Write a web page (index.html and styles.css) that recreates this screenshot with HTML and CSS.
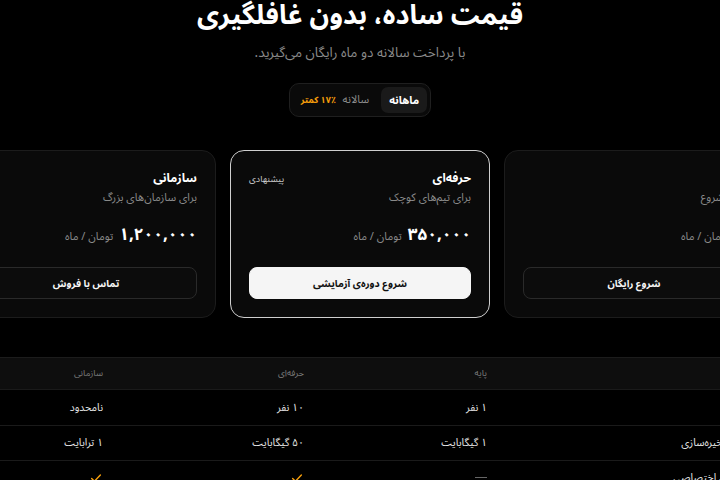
FILE: index.html
```html
<!DOCTYPE html>
<html lang="fa" dir="rtl">
<head>
<meta charset="utf-8">
<title>قیمت‌گذاری</title>
<link rel="stylesheet" href="styles.css">
</head>
<body>
<main class="page">
  <h1 class="title">قیمت ساده، بدون غافلگیری</h1>
  <p class="subtitle">با پرداخت سالانه دو ماه رایگان می‌گیرید.</p>

  <div class="toggle">
    <button class="seg seg-active">ماهانه</button>
    <button class="seg">سالانه <span class="save">٪۱۷ کمتر</span></button>
  </div>

  <section class="cards">
    <article class="card">
      <div class="card-head">
        <h2 class="card-title">پایه</h2>
      </div>
      <p class="card-desc">برای شروع</p>
      <div class="price"><span class="amount">۰</span><span class="unit">تومان / ماه</span></div>
      <button class="btn">شروع رایگان</button>
    </article>

    <article class="card card-featured">
      <div class="card-head">
        <h2 class="card-title">حرفه‌ای</h2>
        <span class="badge">پیشنهادی</span>
      </div>
      <p class="card-desc">برای تیم‌های کوچک</p>
      <div class="price"><span class="amount">۳۵۰,۰۰۰</span><span class="unit">تومان / ماه</span></div>
      <button class="btn btn-primary">شروع دوره‌ی آزمایشی</button>
    </article>

    <article class="card">
      <div class="card-head">
        <h2 class="card-title">سازمانی</h2>
      </div>
      <p class="card-desc">برای سازمان‌های بزرگ</p>
      <div class="price"><span class="amount">۱,۲۰۰,۰۰۰</span><span class="unit">تومان / ماه</span></div>
      <button class="btn">تماس با فروش</button>
    </article>
  </section>

  <section class="compare">
    <div class="row row-head">
      <div class="cell"></div>
      <div class="cell">پایه</div>
      <div class="cell">حرفه‌ای</div>
      <div class="cell">سازمانی</div>
    </div>
    <div class="row">
      <div class="cell">کاربران</div>
      <div class="cell">۱ نفر</div>
      <div class="cell">۱۰ نفر</div>
      <div class="cell">نامحدود</div>
    </div>
    <div class="row">
      <div class="cell">فضای ذخیره‌سازی</div>
      <div class="cell">۱ گیگابایت</div>
      <div class="cell">۵۰ گیگابایت</div>
      <div class="cell">۱ ترابایت</div>
    </div>
    <div class="row">
      <div class="cell">پشتیبانی اختصاصی</div>
      <div class="cell"><span class="dash"></span></div>
      <div class="cell"><svg class="check" viewBox="0 0 16 16" width="14" height="14"><path d="M3 8.5l3.2 3.2L13 4.5" fill="none" stroke="#f59e0b" stroke-width="1.6" stroke-linecap="round" stroke-linejoin="round"/></svg></div>
      <div class="cell"><svg class="check" viewBox="0 0 16 16" width="14" height="14"><path d="M3 8.5l3.2 3.2L13 4.5" fill="none" stroke="#f59e0b" stroke-width="1.6" stroke-linecap="round" stroke-linejoin="round"/></svg></div>
    </div>
  </section>
</main>
</body>
</html>
```

FILE: styles.css
```css
html, body {
  margin: 0;
  padding: 0;
  background: #000;
  overflow: hidden;
}

body {
  font-family: "Noto Sans Arabic", "Vazirmatn", "DejaVu Sans", sans-serif;
  color: #f2f2f2;
}

.page {
  display: flex;
  flex-direction: column;
  align-items: center;
  width: 720px;
  overflow: hidden;
}

.title {
  margin: 0;
  font-size: 27px;
  line-height: 32px;
  font-weight: 700;
  color: #fff;
}

.subtitle {
  margin: 11px 0 0;
  font-size: 13.5px;
  line-height: 20px;
  color: #8a8a8a;
}

.toggle {
  margin-top: 20px;
  display: flex;
  gap: 4px;
  padding: 3px;
  border: 1px solid #1f1f1f;
  border-radius: 10px;
  background: #0a0a0a;
}

.seg {
  font-family: inherit;
  font-size: 11px;
  line-height: 15px;
  padding: 5px 8px;
  border: 0;
  border-radius: 7px;
  background: transparent;
  color: #8c8c8c;
}

.seg-active {
  background: #1a1a1a;
  color: #fff;
  font-weight: 700;
}

.save {
  color: #f59e0b;
  font-weight: 700;
  font-size: 9px;
  margin-right: 4px;
}

.cards {
  margin-top: 33px;
  display: flex;
  justify-content: center;
  gap: 14px;
  width: 720px;
}

.card {
  flex: 0 0 260px;
  box-sizing: border-box;
  height: 168px;
  padding: 18px 18px 18px;
  border: 1px solid #1c1c1c;
  border-radius: 14px;
  background: #0a0a0a;
  display: flex;
  flex-direction: column;
}

.card-featured {
  border: 1.5px solid #cfcfcf;
}

.card-head {
  display: flex;
  justify-content: space-between;
  align-items: center;
}

.card-title {
  margin: 0;
  font-size: 12px;
  line-height: 20px;
  font-weight: 700;
  color: #fff;
}

.badge {
  font-size: 9px;
  color: #cfcfcf;
}

.card-desc {
  margin: 0;
  font-size: 11px;
  line-height: 18px;
  color: #8a8a8a;
}

.price {
  margin-top: 15px;
  display: flex;
  align-items: baseline;
  gap: 6px;
}

.amount {
  font-size: 17px;
  line-height: 26px;
  font-weight: 700;
  color: #fff;
}

.unit {
  font-size: 11px;
  color: #8a8a8a;
}

.btn {
  margin-top: auto;
  height: 32px;
  font-family: inherit;
  font-size: 10px;
  font-weight: 700;
  color: #f5f5f5;
  background: #0c0c0c;
  border: 1px solid #2a2a2a;
  border-radius: 8px;
}

.btn-primary {
  background: #f5f5f5;
  color: #111;
  border-color: #f5f5f5;
}

.compare {
  margin-top: 39px;
  width: 720px;
  display: flex;
  flex-direction: column;
  align-items: center;
  border-top: 1px solid #1c1c1c;
}

.row {
  display: grid;
  grid-template-columns: 269px 183px 201px 171px;
  width: 824px;
  height: 35px;
  align-items: center;
  box-shadow: 0 1px 0 #1a1a1a;
}

.row-head {
  height: 31px;
  background: #0e0e0e;
  margin-bottom: 1px;
}

.cell {
  padding: 0 16px;
  font-size: 10.5px;
  color: #e6e6e6;
  display: flex;
  align-items: center;
}

.row-head .cell {
  font-size: 9px;
  color: #7a7a7a;
}

.dash {
  display: inline-block;
  width: 12px;
  height: 1px;
  background: #666;
}
```
